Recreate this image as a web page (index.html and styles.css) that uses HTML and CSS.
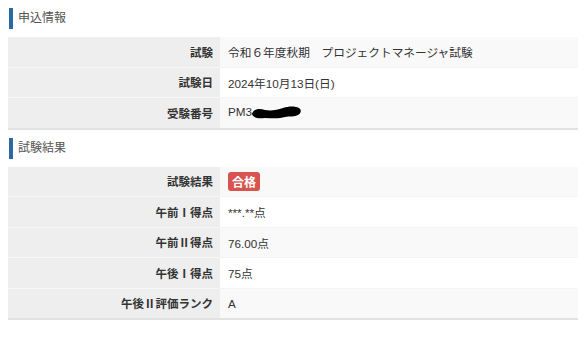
FILE: index.html
```html
<!DOCTYPE html>
<html lang="ja">
<head>
<meta charset="utf-8">
<link rel="stylesheet" href="styles.css">
</head>
<body>
<h2 class="sec-title">申込情報</h2>
<table class="info">
  <tr><th>試験</th><td>令和６年度秋期　プロジェクトマネージャ試験</td></tr>
  <tr><th>試験日</th><td>2024年10月13日(日)</td></tr>
  <tr><th>受験番号</th><td>PM3<svg class="blot" width="52" height="16" viewBox="0 0 52 16"><path d="M1 9 C2 4 8 3 14 5 C20 6 26 5 32 3 C38 1 44 1 48 3 C51 5 50 8 47 10 C44 12 38 11 34 12 C28 14 20 13 14 13 C8 14 2 13 1 9 Z" fill="#000"/></svg></td></tr>
</table>
<h2 class="sec-title">試験結果</h2>
<table class="info">
  <tr><th>試験結果</th><td><span class="badge">合格</span></td></tr>
  <tr><th>午前Ⅰ得点</th><td>***.**点</td></tr>
  <tr><th>午前Ⅱ得点</th><td>76.00点</td></tr>
  <tr><th>午後Ⅰ得点</th><td>75点</td></tr>
  <tr><th>午後Ⅱ評価ランク</th><td>A</td></tr>
</table>
</body>
</html>
```
FILE: styles.css
```css
body {
  margin: 8px;
  background: #fff;
  color: #333;
  font-family: "Liberation Sans", "Noto Sans CJK JP", sans-serif;
  font-size: 11.7px;
}
.sec-title {
  margin: 0 0 8px 1px;
  padding-left: 5px;
  border-left: 4px solid #2a6aa0;
  height: 21px;
  line-height: 21px;
  font-size: 12px;
  font-weight: normal;
  color: #555;
}
.info {
  width: 100%;
  border-collapse: collapse;
  border-bottom: 2px solid #e2e2e2;
  margin-bottom: 8px;
}
.info th, .info td {
  height: 29.5px;
  padding: 0;
  border-top: 1px solid #f4f4f4;
  vertical-align: middle;
}
.info tr:first-child th, .info tr:first-child td {
  border-top: none;
}
.info th {
  width: 212px;
  background: #eeeeee;
  text-align: right;
  padding-right: 7px;
  box-sizing: border-box;
  font-family: "Noto Sans CJK JP", sans-serif;
  font-size: 11.5px;
  font-weight: bold;
  color: #333;
  border-top-color: #f6f6f6;
}
.info td {
  padding-left: 8px;
  background: #fff;
}
.info tr:nth-child(odd) td {
  background: #f9f9f9;
}
.blot {
  vertical-align: middle;
  margin-left: -1px;
}
.badge {
  display: inline-block;
  background: #d9534f;
  color: #fff;
  font-family: "Noto Sans CJK JP", sans-serif;
  font-weight: bold;
  font-size: 12px;
  line-height: 19px;
  padding: 0 4px;
  border-radius: 3px;
}
```
